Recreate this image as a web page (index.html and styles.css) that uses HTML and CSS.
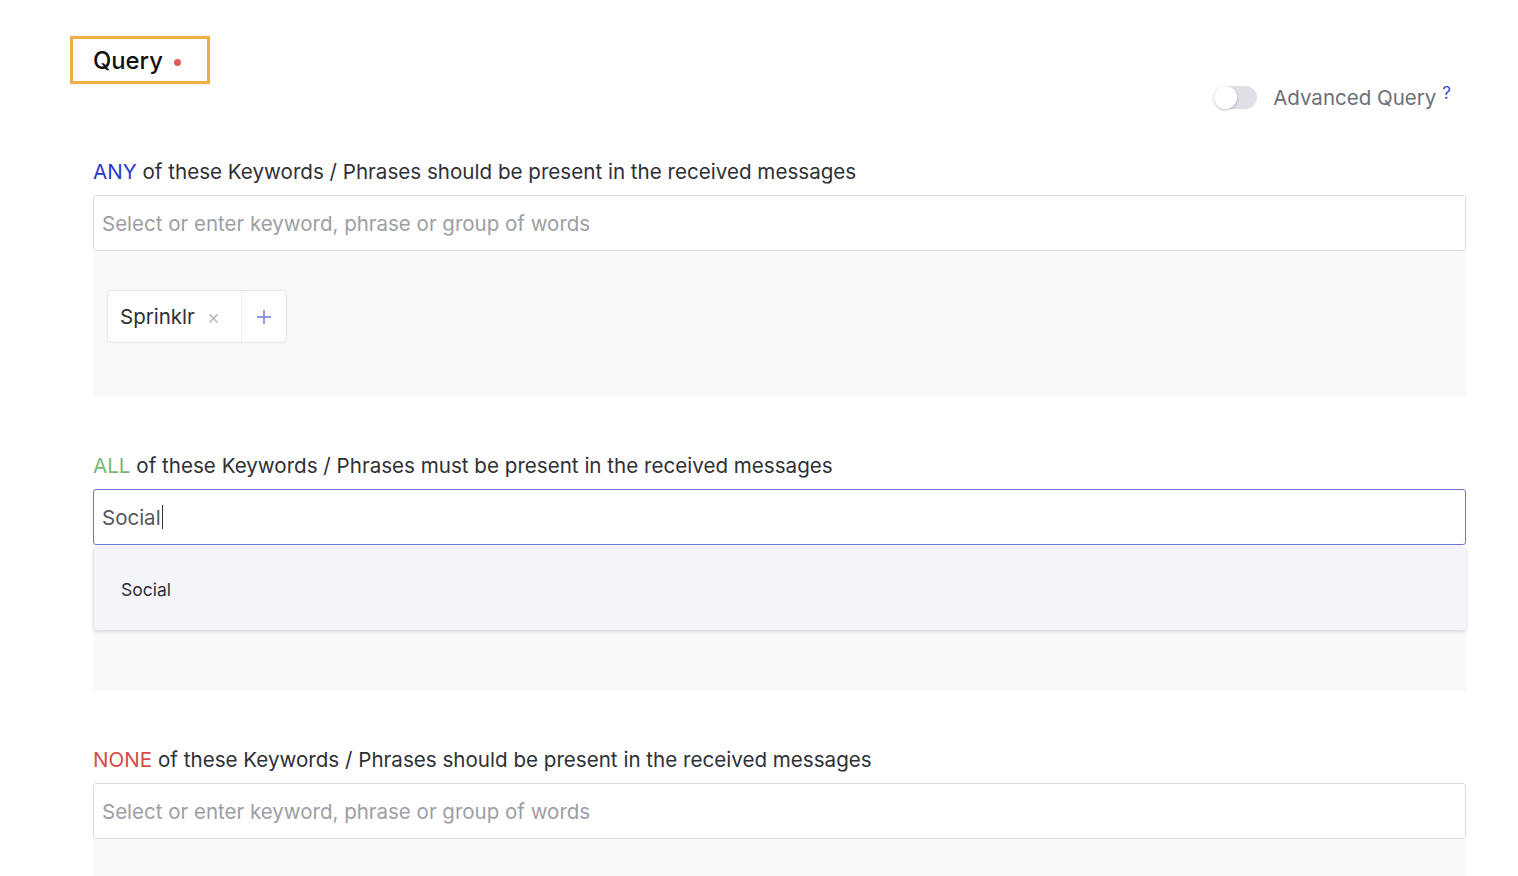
FILE: index.html
```html
<!DOCTYPE html>
<html>
<head>
<meta charset="utf-8">
<link rel="stylesheet" href="styles.css">
</head>
<body>
<div class="page">
  <div class="header">
    <div class="query-title">Query <span class="req-dot"></span></div>
    <div class="adv">
      <span class="toggle"><span class="knob"></span></span>
      <span class="adv-label">Advanced Query</span><sup class="help">?</sup>
    </div>
  </div>

  <div class="content">
    <section class="block">
      <div class="label"><span class="kw any">ANY</span> of these Keywords / Phrases should be present in the received messages</div>
      <div class="input placeholder">Select or enter keyword, phrase or group of words</div>
      <div class="tray">
        <div class="chip">
          <span class="chip-text">Sprinklr</span>
          <span class="chip-x">&#215;</span>
          <span class="chip-add">
            <svg width="16" height="16" viewBox="0 0 16 16"><path d="M8 1v14M1 8h14" stroke="#6f78d9" stroke-width="1.4" fill="none"/></svg>
          </span>
        </div>
      </div>
    </section>

    <section class="block">
      <div class="label"><span class="kw all">ALL</span> of these Keywords / Phrases must be present in the received messages</div>
      <div class="input focused">Social<span class="caret"></span></div>
      <div class="tray">
        <div class="dropdown">
          <div class="option">Social</div>
        </div>
      </div>
    </section>

    <section class="block">
      <div class="label"><span class="kw none">NONE</span> of these Keywords / Phrases should be present in the received messages</div>
      <div class="input placeholder">Select or enter keyword, phrase or group of words</div>
      <div class="tray"></div>
    </section>
  </div>
</div>
</body>
</html>
```

FILE: styles.css
```css
* { box-sizing: border-box; }
html, body { margin: 0; padding: 0; background: #ffffff; overflow: hidden; height: 876px; }
body { font-family: Inter, "Noto Sans", "Liberation Sans", sans-serif; color: #333438; }

.page { padding: 36px 0 0 70px; width: 1518px; }

.header { display: flex; justify-content: space-between; align-items: flex-start; width: 1381px; }

.query-title {
  width: 140px; height: 48px;
  border: 3px solid #ecb043;
  padding-left: 20px; padding-top: 1px;
  display: flex; align-items: center; gap: 11px;
  font-size: 23.8px; font-weight: 500; color: #111;
}
.req-dot { width: 7px; height: 7px; border-radius: 50%; background: #e05a5a; display: inline-block; margin-top: 3px; }

.adv { display: flex; align-items: center; margin-top: 49px; }
.toggle {
  width: 43px; height: 23px; border-radius: 12px; background: #dfe0e6;
  position: relative; display: inline-block; margin-right: 16px;
}
.knob {
  position: absolute; left: 0; top: 0; width: 23px; height: 23px; border-radius: 50%;
  background: #fff; box-shadow: 0 1px 3px rgba(0,0,0,0.25);
}
.adv-label { font-size: 20.5px; color: #6c6f78; }
.help { color: #3b46c9; font-size: 17px; margin-left: 6px; position: relative; top: -5px; }

.content { margin-left: 23px; width: 1373px; margin-top: 50px; display: flex; flex-direction: column; gap: 57px; }

.label { font-size: 20.6px; line-height: 24px; color: #2f3035; margin-bottom: 11px; }
.kw.any { color: #2b38cc; }
.kw.all { color: #76b873; }
.kw.none { color: #d84c4c; }

.input {
  height: 56px; border: 1px solid #dcdde3; border-radius: 3px; background: #fff;
  padding-left: 8px; display: flex; align-items: center; font-size: 20.5px;
}
.input.placeholder { color: #9d9ea3; }
.input.focused { border-color: #6f72d8; color: #55575d; }
.caret { display: inline-block; width: 1.5px; height: 24px; background: #333; margin-left: 1px; }

.tray { height: 146px; background: #f9f9fb; padding: 39px 0 0 14px; position: relative; }

.chip {
  display: inline-flex; align-items: stretch; height: 53px; width: 180px;
  background: #fff; border: 1px solid #e4e5ea; border-radius: 4px;
}
.chip-text { font-size: 20.5px; color: #2f3035; display: flex; align-items: center; padding-left: 12px; }
.chip-x { color: #b9bbc1; font-size: 20px; display: flex; align-items: center; margin-left: 12px; width: 34px; }
.chip-add { border-left: 1px solid #eceef2; flex: 1; display: flex; align-items: center; justify-content: center; }

.dropdown {
  position: absolute; left: 1px; right: 0; top: 3px; height: 82px;
  background: #f4f5fa; box-shadow: 0 1px 4px rgba(0,0,0,0.18); border-radius: 0 0 3px 3px;
  display: flex; align-items: center;
}
.option { padding-left: 27px; font-size: 17.5px; color: #2f3035; }
```
